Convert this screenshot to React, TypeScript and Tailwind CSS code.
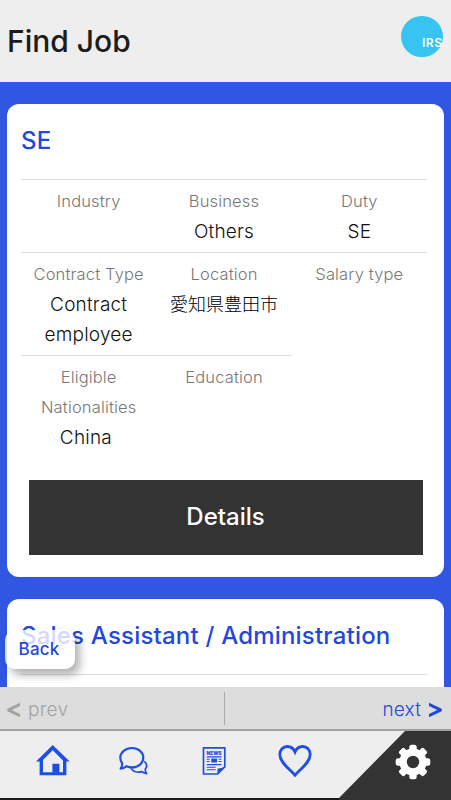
import type { ReactNode } from "react";

type Field = {
  label: string;
  value?: string;
  border?: boolean;
  kanji?: boolean;
};

const fields: Field[] = [
  { label: "Industry", border: true },
  { label: "Business", value: "Others", border: true },
  { label: "Duty", value: "SE", border: true },
  { label: "Contract Type", value: "Contract employee", border: true },
  { label: "Location", value: "愛知県豊田市", border: true, kanji: true },
  { label: "Salary type" },
  { label: "Eligible Nationalities", value: "China\u00a0" },
  { label: "Education" },
];

function Header() {
  return (
    <header className="flex h-[82px] shrink-0 justify-between bg-[#eeeeee] pr-[8.5px] pl-[7px]">
      <h1 className="pt-[19px] text-[30px] leading-[44px] font-medium text-[#1c1c1c]">
        Find Job
      </h1>
      <div className="mt-[15.5px] flex size-[41.5px] items-center justify-end rounded-full bg-[#38c4f0] pt-[13px] text-[12px] leading-none font-semibold tracking-[0.5px] text-white">
        IRS
      </div>
    </header>
  );
}

function Card({ title, children }: { title: string; children?: ReactNode }) {
  return (
    <section className="rounded-[12px] bg-white px-[14px]">
      <h2 className="h-[75px] pt-[18px] text-[24px] leading-[38px] font-medium tracking-[0.2px] whitespace-nowrap text-[#1f48dc]">
        {title}
      </h2>
      {children}
    </section>
  );
}

function FieldGrid() {
  return (
    <dl className="mr-[3px] grid grid-cols-3 border-t border-[#dddddd] text-center leading-[30.4px] font-light">
      {fields.map((field) => (
        <div
          key={field.label}
          className={
            field.border
              ? "border-b border-[#dddddd] px-[8px] pt-[6px] pb-[5px]"
              : "px-[8px] pt-[6px] pb-[5px]"
          }
        >
          <dt className="text-[16.5px] tracking-[0.15px] text-[#777777]">{field.label}</dt>
          <dd
            className={
              field.kanji
                ? "relative top-px text-[18px] whitespace-nowrap text-black"
                : "relative top-[0.6px] text-[19px] tracking-[0.2px] text-[#111111]"
            }
          >
            {field.value}
          </dd>
        </div>
      ))}
    </dl>
  );
}

function Pager() {
  return (
    <div className="grid h-[44px] shrink-0 grid-cols-[1fr_1px_1fr] items-center border-b-2 border-[#a2a2a2] bg-[#dddddd] pr-[9px] pl-[7px] text-[19px] font-light">
      <div className="flex items-center gap-[8px] pt-[4px] text-[#a3a3a3]">
        <svg className="h-[16px] w-[13px]" viewBox="0 0 13 16" fill="currentColor">
          <path d="M13 .8v3.300L4.700 8l8.300 3.900v3.300L.3 9.300V6.700z" />
        </svg>
        <span className="leading-[24px] tracking-[0.3px]">prev</span>
      </div>
      <div className="h-[33px] bg-[#aaaaaa]" />
      <div className="flex items-center justify-end gap-[8px] pt-[4px] text-[#1f48dc]">
        <span className="leading-[24px] tracking-[0.2px]">next</span>
        <svg className="h-[16px] w-[13px]" viewBox="0 0 13 16" fill="currentColor">
          <path d="M0 .8v3.300L8.300 8 0 11.900v3.300l12.700-5.900V6.700z" />
        </svg>
      </div>
    </div>
  );
}

function TabBar() {
  return (
    <nav className="relative flex h-[69px] shrink-0 border-b-2 border-[#1a1a1a] bg-[#eeeeee] text-[#1f4fe0]">
      <svg className="absolute top-0 right-0 h-[69px] w-[112px]" viewBox="0 0 112 69">
        <path d="M66 0h46v69H-2z" fill="#333333" />
      </svg>
      <svg className="mt-[13px] ml-[35px] h-[34px] w-[36px]" viewBox="0 0 36 34">
        <path d="M17.700 1 1 17.500h3.600v13.700h26.800V17.500h3.300zm0 5.300L28 16.600v11.600h-3.600v-8.400h-7v8.400H8V16z" fill="currentColor" />
      </svg>
      <svg className="mt-[13px] ml-[46px] h-[34px] w-[34px]" viewBox="0 0 34 34" fill="none" stroke="currentColor" strokeLinejoin="round">
        <path d="M15 4c6.400 0 11.300 4.300 11.300 9.700S21.400 23.400 15 23.400c-2.100 0-4-.4-5.700-1.200-1.700 1.500-3.500 2.300-5.600 2.500 1-1.500 1.600-3.200 1.600-5.100-1.200-1.600-2-3.600-2-5.900C3.300 8.300 8.400 4 15 4z" strokeWidth="2.200" />
        <path d="M27.200 17.500c1.500 1 2.400 2.500 2.400 4.200 0 1.300-.5 2.500-1.400 3.500 0 1.700.5 3.100 1.500 4.500-1.800-.1-3.400-.8-4.700-2-5.200 1.200-9.500-.3-11.200-4.200" strokeWidth="1.700" />
      </svg>
      <svg className="mt-[14px] ml-[51px] h-[32px] w-[24px]" viewBox="0 0 24 32">
        <path d="M1.500 2.800h21.300v19l-7.200 7.200H1.500z" fill="none" stroke="currentColor" strokeWidth="1.700" />
        <path d="M22.900 21.300 15.300 29.200l.3-5.700c2.800-.1 5.100-.6 7.300-2.200z" fill="currentColor" />
        <text x="12" y="9.600" fontSize="4.800" fontWeight="900" textAnchor="middle" fill="currentColor">NEWS</text>
        <path d="M4.700 11.200h14.800v1.200H4.700zM4.700 13.800h3v1h-3zm0 2.200h3v1h-3zm11.800-2.200h3v1h-3zm0 2.200h3v1h-3zM9.300 13.600h5.700v4H9.300zM4.700 19h14.800v1.200H4.700zm0 2.800h9v1h-9zm0 2.400h9v1h-9z" fill="currentColor" />
      </svg>
      <svg className="mt-[13px] ml-[51px] h-[34px] w-[36px]" viewBox="0 0 36 34" fill="none" stroke="currentColor" strokeWidth="2.800">
        <path d="M18 31.200C12 24.500 2.800 18.400 2.800 10.600c0-4.700 3.300-8.100 7.500-8.100 3.400 0 6.200 2 7.700 5.500 1.500-3.500 4.300-5.500 7.700-5.500 4.200 0 7.500 3.400 7.500 8.100C33.200 18.400 24 24.500 18 31.200z" />
      </svg>
      <svg className="absolute top-[13px] right-[20px] size-[36px]" viewBox="-18 -18 36 36" fill="#ffffff">
        <circle r="13.600" />
        <rect x="-3.700" y="-17.300" width="7.400" height="34.600" rx="2.500" />
        <rect x="-3.700" y="-17.300" width="7.400" height="34.600" rx="2" transform="rotate(45)" />
        <rect x="-3.700" y="-17.300" width="7.400" height="34.600" rx="2.500" transform="rotate(90)" />
        <rect x="-3.700" y="-17.300" width="7.400" height="34.600" rx="2" transform="rotate(135)" />
        <circle r="6.200" fill="#333333" />
      </svg>
    </nav>
  );
}

export default function App() {
  return (
    <div className="flex h-[800px] w-[451px] flex-col overflow-hidden bg-[#3056e2] font-['Inter','Noto_Sans_CJK_JP',sans-serif]">
      <Header />
      <main className="relative flex h-[605px] shrink-0 flex-col gap-[22px] overflow-hidden px-[7px] pt-[22px]">
        <Card title="SE">
          <FieldGrid />
          <div className="px-[7.500px] pt-[22px] pb-[22px]">
            <button className="block h-[75px] w-full bg-[#333333] pb-[2px] text-[24px] font-medium text-white">
              Details
            </button>
          </div>
        </Card>
        <Card title="Sales Assistant / Administration">
          <div className="mr-[3px] h-[40px] border-t border-[#dddddd]" />
        </Card>
        <button className="absolute bottom-[18px] left-[5px] h-[39px] w-[70px] rounded-[10px] bg-white/80 pr-[2px] text-[17px] font-medium tracking-[0.2px] text-[#1f48dc] shadow-[5px_6px_8px_rgba(0,0,0,0.3)]">
          Back
        </button>
      </main>
      <Pager />
      <TabBar />
    </div>
  );
}
